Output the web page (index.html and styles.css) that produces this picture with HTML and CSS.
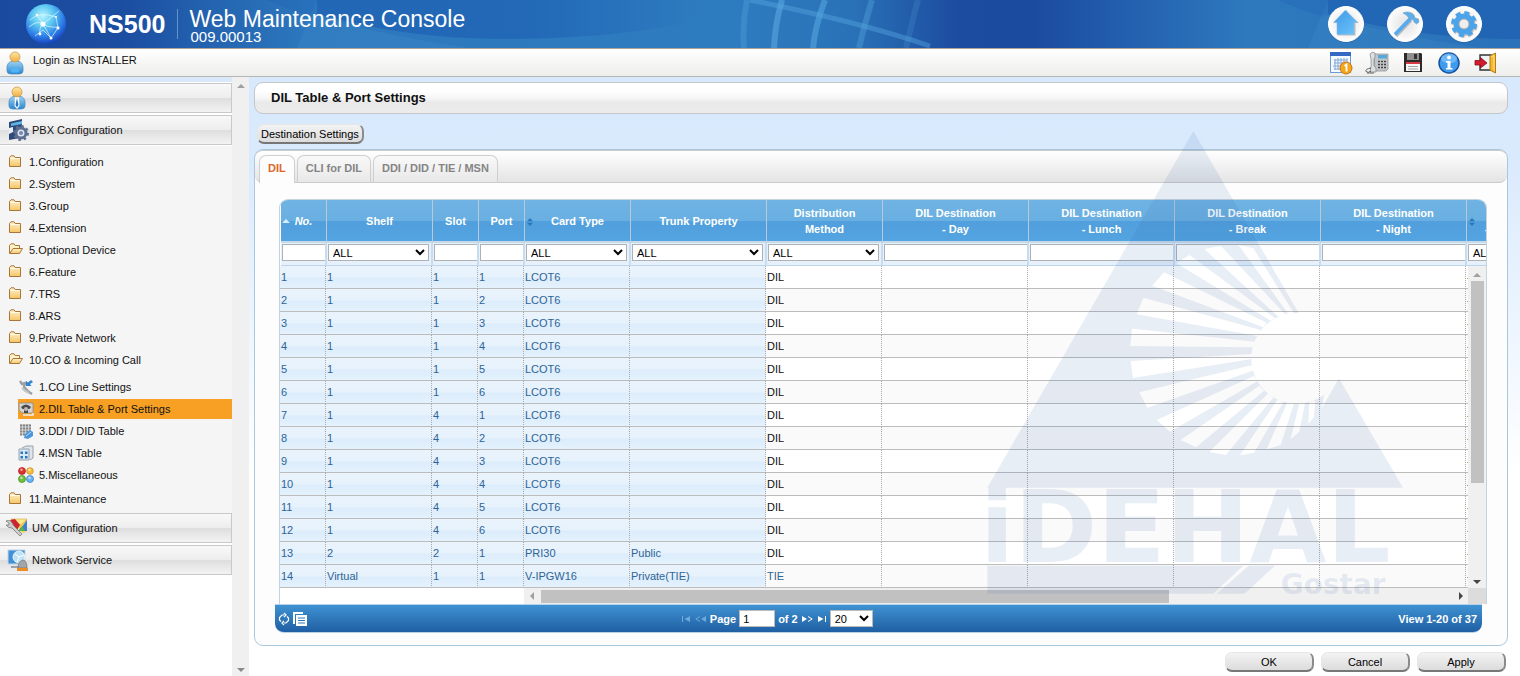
FILE: index.html
```html
<!DOCTYPE html>
<html lang="en">
<head>
<meta charset="utf-8">
<title>NS500 Web Maintenance Console</title>
<link rel="stylesheet" href="styles.css">
</head>
<body>
<svg width="0" height="0" class="defs" aria-hidden="true">
  <defs>
    <linearGradient id="gFolder" x1="0" y1="0" x2="0" y2="1"><stop offset="0" stop-color="#fff3cf"/><stop offset="1" stop-color="#f5c565"/></linearGradient>
    <linearGradient id="gSkin" x1="0" y1="0" x2="0" y2="1"><stop offset="0" stop-color="#ffe9a8"/><stop offset="1" stop-color="#f0ab3c"/></linearGradient>
    <linearGradient id="gBody" x1="0" y1="0" x2="0" y2="1"><stop offset="0" stop-color="#9fd4f5"/><stop offset="1" stop-color="#2a86d0"/></linearGradient>
    <linearGradient id="gAction" x1="0" y1="0" x2="1" y2="1"><stop offset="0" stop-color="#3f97e6"/><stop offset="1" stop-color="#6cc6fa"/></linearGradient>
    <radialGradient id="gDisc" cx=".5" cy=".5" r=".5"><stop offset="0" stop-color="#e2e2e2"/><stop offset=".75" stop-color="#f6f6f6"/><stop offset="1" stop-color="#fff"/></radialGradient>
    <symbol id="folder" viewBox="0 0 14 13"><path d="M.5 11.500V2.500L2 .8H5L6.200 2.500H11.500V11.500Z" fill="url(#gFolder)" stroke="#a9763a"/><path d="M1.500 3.500H10.500" stroke="#fffbe8"/></symbol>
    <symbol id="folder-open" viewBox="0 0 14 13"><path d="M.5 10.500V2.500L2 .8H5L6.200 2.500H10.500V5" fill="#fff1c6" stroke="#a9763a"/><path d="M.8 10.500 4 5.500H13.500L10.500 10.500Z" fill="url(#gFolder)" stroke="#a9763a"/></symbol>
  </defs>
</svg>

<header class="banner">
  <svg class="banner-art" viewBox="0 0 1520 48" preserveAspectRatio="none" aria-hidden="true">
    <defs>
      <linearGradient id="gWave" gradientUnits="userSpaceOnUse" x1="317" y1="0" x2="700" y2="0"><stop offset="0" stop-color="#1757ae"/><stop offset=".55" stop-color="#1757ae"/><stop offset="1" stop-color="#1757ae" stop-opacity="0"/></linearGradient>
      <g id="wave">
        <path d="M317 0V14C380 31 440 39 500 39C580 39 640 33 700 20V0Z" fill="url(#gWave)" opacity=".5"/>
        <path d="M267 0C290 10 304 14 313 17L317 0Z" fill="#1757ae" opacity=".2"/>
        <path d="M317 0 297 48H470C400 38 350 26 313 14Z" fill="#4a97d2" opacity=".2"/>
      </g>
    </defs>
    <use href="#wave"/>
    <use href="#wave" x="1011"/>
    <g fill="none" stroke="#55a5dd" stroke-width="6">
      <path d="M747 0Q742 24 744 48" opacity=".35"/>
      <path d="M782 0Q775 24 774 48" opacity=".65"/>
      <path d="M825 0Q815 26 813 48" opacity=".6"/>
      <path d="M872 0Q864 26 859 48" opacity=".4"/>
      <path d="M918 0Q911 26 906 48" opacity=".2"/>
      <path d="M750 0Q860 22 930 46" opacity=".45" stroke-width="5"/>
    </g>
  </svg>
  <svg class="globe" viewBox="0 0 42 42" role="img" aria-label="NS500">
    <defs><radialGradient id="gGlobe" cx=".42" cy=".3" r=".75"><stop offset="0" stop-color="#b9f4ff"/><stop offset=".35" stop-color="#5fc9f2"/><stop offset=".7" stop-color="#2b7be6"/><stop offset="1" stop-color="#1535b0"/></radialGradient></defs>
    <circle cx="21" cy="21" r="20" fill="url(#gGlobe)"/>
    <path d="M4 24Q12 17 18 21T34 24M12 12 18 21 26 35M18 21 34 8M10 33 18 27 26 35 33 25 31 14M5 17Q14 8 31 14M15 31Q14 24 18 21" fill="none" stroke="#e2faff" stroke-width=".8" opacity=".85"/>
    <g fill="#fff"><circle cx="18" cy="21" r="2.600"/><circle cx="12" cy="12" r="1.300"/><circle cx="33" cy="25" r="1.600"/><circle cx="26" cy="35" r="1.500"/><circle cx="15" cy="31" r="1.400"/><circle cx="31" cy="14" r="1"/></g>
  </svg>
  <strong class="product">NS500</strong>
  <div class="console"><h1>Web Maintenance Console</h1><span>009.00013</span></div>
  <nav class="actions" aria-label="Console">
    <button type="button" aria-label="Home"><svg viewBox="0 0 38 38"><circle cx="19" cy="19.500" r="18" fill="#173f80" opacity=".5"/><circle cx="19" cy="19" r="17.500" fill="url(#gDisc)" stroke="#fff"/><path d="M19 6 32 18H28.500V30.500H10.500V18H7Z" fill="#9b9b9b" opacity=".6"/><path d="M18.500 5 30.500 17.500H27V29.500H10V17.500H6.500Z" fill="url(#gAction)" stroke="#8dbce6" stroke-width=".6"/></svg></button>
    <button type="button" aria-label="Tools"><svg viewBox="0 0 38 38"><circle cx="19" cy="19.500" r="18" fill="#173f80" opacity=".5"/><circle cx="19" cy="19" r="17.500" fill="url(#gDisc)" stroke="#fff"/><path d="M10 31 25 15" stroke="#999" stroke-width="3.500" opacity=".6"/><path d="M9 29.500 24.500 13.500" stroke="#55aaf0" stroke-width="3.800"/><path d="M17 8C20 6.500 25 6.500 28 10L29 13 32.500 14 33 17 30.500 19 28 17 27.500 15 24 13.500 22 12C21 10 19 9.500 17 8Z" fill="#5eaee9" stroke="#7d9fbd" stroke-width=".6"/></svg></button>
    <button type="button" aria-label="Settings"><svg viewBox="0 0 38 38"><circle cx="19" cy="19.500" r="18" fill="#173f80" opacity=".5"/><circle cx="19" cy="19" r="17.500" fill="url(#gDisc)" stroke="#fff"/><g transform="translate(.6 1)" fill="none" stroke="#999" opacity=".6"><circle cx="19" cy="19" r="8" stroke-width="6"/><circle cx="19" cy="19" r="11.200" stroke-width="3.600" stroke-dasharray="4.900 3.900"/></g><g fill="none" stroke="#4ba3ea"><circle cx="19" cy="19" r="7.500" stroke-width="6"/><circle cx="19" cy="19" r="11.200" stroke-width="3.600" stroke-dasharray="4.900 3.900"/></g><circle cx="19" cy="19" r="5" fill="#eee" stroke="#aaa"/></svg></button>
  </nav>
</header>

<div class="login-bar">
  <svg class="login-icon" viewBox="0 0 18 24" aria-hidden="true"><path d="M1 17C1 11 5 10 9 10S17 11 17 17V20Q17 23 13 23H5Q1 23 1 20Z" fill="url(#gBody)" stroke="#4b8fc4" stroke-width=".8"/><circle cx="9" cy="6" r="5" fill="url(#gSkin)" stroke="#c99a4c" stroke-width=".8"/><path d="M4 19Q9 14 14 19L12 21.500H6Z" fill="#4fb4f3"/></svg>
  <span>Login as INSTALLER</span>
  <div class="tools">
    <button type="button" aria-label="Calendar"><svg viewBox="0 0 24 24"><rect x="1.500" y="1.500" width="20" height="20" fill="#f4f8ff" stroke="#6f9bd2"/><path d="M1 1H22V5H1Z" fill="#3567c4"/><path d="M5 9H18M5 12H18M4 15H14M5 18H12M6 8V19M9 7V19M12 7V19M15 7V14M18 7V12" stroke="#86a7d6"/><circle cx="17" cy="17" r="6" fill="#f4a61d" stroke="#c8750d"/><path d="M15.500 15 17.500 13.500V20.500" stroke="#fff" stroke-width="1.800" fill="none"/></svg></button>
    <button type="button" aria-label="Telephone"><svg viewBox="0 0 24 24"><path d="M9 3H23V18L21 20H10Z" fill="#c3c6c9" stroke="#85888b" stroke-width=".7"/><path d="M5 3Q7 0 10 2V6L9 8V15L11 17V21H5Q7 14 6 8Z" fill="#dddfe1" stroke="#8a8d90" stroke-width=".8"/><path d="M13 4H22V7.500H13Z" fill="#56a9dc"/><path d="M13 10.500H21M13 13.500H21M13 16.500H21" stroke="#454545" stroke-width="1.600" stroke-dasharray="2 1"/><path d="M6 17Q0 18 1 20.500Q3 22.500 6 20M2 22H9" fill="none" stroke="#555" stroke-width=".9"/></svg></button>
    <button type="button" aria-label="Save"><svg viewBox="0 0 24 24"><path d="M3 2H20L21 3V21H3Z" fill="#2c2a2b"/><path d="M6 2H18V9H6Z" fill="#8f8f8f"/><path d="M13 3H16V8H13Z" fill="#333"/><path d="M5 12H19V20H5Z" fill="#f7f7f7"/><path d="M5 11H19V13H5Z" fill="#d83a43"/><path d="M7 15.500H17M7 18H17" stroke="#a5a5a5"/></svg></button>
    <button type="button" aria-label="Information"><svg viewBox="0 0 24 24"><circle cx="12" cy="12" r="10" fill="#3f9bed" stroke="#174f9f" stroke-width="1.500"/><ellipse cx="12" cy="7.500" rx="8" ry="5" fill="#8cccfb" opacity=".6"/><circle cx="12" cy="6.500" r="1.900" fill="#fff"/><path d="M9 10H13.500V17H15.500V18.500H9V17H10.500V11.500H9Z" fill="#fff"/></svg></button>
    <button type="button" aria-label="Logout"><svg viewBox="0 0 24 24"><path d="M7 4H18V19H7Z" fill="#eef3f7" stroke="#333" stroke-width="1.400"/><path d="M17 5 22.500 2V22L17 19Z" fill="#f4b72f" stroke="#b57c12"/><path d="M18 6 21 4.500V19" stroke="#ffe28a" fill="none"/><path d="M2 9.500H7.500V6.500L14 12 7.500 17V14H2Z" fill="#d31c2b" stroke="#8a0c17" stroke-width=".8"/></svg></button>
  </div>
</div>

<div class="layout">
  <aside class="side">
    <nav class="menu" aria-label="Main menu">
      <a class="section" href="#users"><svg viewBox="0 0 24 24" aria-hidden="true"><path d="M4 17C4 11 8 10 12 10S20 11 20 17V20Q20 23 16 23H8Q4 23 4 20Z" fill="url(#gBody)" stroke="#4b8fc4" stroke-width=".8"/><path d="M10 11H14L14.500 20 12 23 9.500 20Z" fill="#fff"/><path d="M12 12 13.500 19 12 21.500 10.500 19Z" fill="#2a79c4"/><circle cx="12" cy="6" r="5" fill="url(#gSkin)" stroke="#c99a4c" stroke-width=".8"/></svg>Users</a>
      <a class="section" href="#pbx"><svg viewBox="0 0 24 24" aria-hidden="true"><path d="M4 4 17 1V17L15 20 4 22Z" fill="#2e4b78"/><path d="M6 5.500 17 3V6L6 8Z" fill="#5cb6e8"/><path d="M4 10 8 9V14L4 16Z" fill="#e6eef7"/><circle cx="16" cy="15" r="5" fill="#dfe5ef" stroke="#5f6f91" stroke-width="3"/><circle cx="16" cy="15" r="7" fill="none" stroke="#5f6f91" stroke-width="2" stroke-dasharray="2.600 2.900"/><circle cx="16" cy="15" r="2" fill="#6e87b0"/></svg>PBX Configuration</a>
      <ul class="tree">
        <li><a href="#c1"><svg><use href="#folder"/></svg>1.Configuration</a></li>
        <li><a href="#c2"><svg><use href="#folder"/></svg>2.System</a></li>
        <li><a href="#c3"><svg><use href="#folder"/></svg>3.Group</a></li>
        <li><a href="#c4"><svg><use href="#folder"/></svg>4.Extension</a></li>
        <li><a href="#c5"><svg><use href="#folder-open"/></svg>5.Optional Device</a></li>
        <li><a href="#c6"><svg><use href="#folder"/></svg>6.Feature</a></li>
        <li><a href="#c7"><svg><use href="#folder"/></svg>7.TRS</a></li>
        <li><a href="#c8"><svg><use href="#folder"/></svg>8.ARS</a></li>
        <li><a href="#c9"><svg><use href="#folder"/></svg>9.Private Network</a></li>
        <li><a href="#c10"><svg><use href="#folder-open"/></svg>10.CO &amp; Incoming Call</a>
          <ul class="branch">
            <li><a href="#s1"><svg viewBox="0 0 16 16"><path d="M2 2 4 5 7 4 6 8 11 13 14 15" fill="none" stroke="#9a9fa5" stroke-width="2.400"/><path d="M4 9 7 12 11 14" fill="none" stroke="#c4c7ca" stroke-width="2"/><path d="M8 7V2L10 3.500 13 1 15 3 12 5 13.500 7Z" fill="#2f83cf"/></svg>1.CO Line Settings</a></li>
            <li><a class="current" href="#s2" aria-current="page"><svg viewBox="0 0 16 16"><path d="M1 2H15V12H4L1 9Z" fill="#d3d3d3" stroke="#8c8c8c" stroke-width=".8"/><path d="M3 6Q8 1 13 6L11.500 8H10V12H6V8H4.500Z" fill="#4a4a4a"/><circle cx="8" cy="8" r="2" fill="#bbb"/><path d="M5 14H15V12" fill="none" stroke="#eee" stroke-width="1.500"/></svg>2.DIL Table &amp; Port Settings</a></li>
            <li><a href="#s3"><svg viewBox="0 0 16 16"><path d="M2 1H13V12H2Z" fill="#d9d9d9"/><path d="M2 2.500H13M2 5.500H13M2 8.500H13M2 11.500H13" stroke="#838383" stroke-width="2" stroke-dasharray="2.200 .8"/><path d="M6 15 7 11 12 7 15 9V13L10 16Z" fill="#4c97dc"/><path d="M8 13 13 9" stroke="#b3daf8"/></svg>3.DDI / DID Table</a></li>
            <li><a href="#s4"><svg viewBox="0 0 16 16"><path d="M4 3 8 1H15V13L12 15" fill="#dfe5ea" stroke="#8f9aa5" stroke-width=".9"/><path d="M1 4H11V15H1Z" fill="#d8eaf8" stroke="#8f9aa5" stroke-width=".9"/><path d="M2.500 6.500H5V9H2.500ZM7 6.500H9.500V9H7ZM2.500 11H5V13.500H2.500ZM7 11H9.500V13.500H7Z" fill="#2f74be"/></svg>4.MSN Table</a></li>
            <li><a href="#s5"><svg viewBox="0 0 16 16"><circle cx="4" cy="4" r="3.500" fill="#e0302f" stroke="#a31d1d" stroke-width=".7"/><circle cx="12" cy="4" r="3.300" fill="#f6bd36" stroke="#c4861a" stroke-width=".7"/><circle cx="4" cy="12" r="3.500" fill="#6fc23c" stroke="#3d8a1d" stroke-width=".7"/><circle cx="12" cy="12" r="3.500" fill="#6bb4f2" stroke="#2f77bf" stroke-width=".7"/><g fill="#fff" opacity=".6"><circle cx="3.500" cy="2.700" r="1.200"/><circle cx="11.500" cy="2.700" r="1.200"/><circle cx="3.500" cy="10.700" r="1.200"/><circle cx="11.500" cy="10.700" r="1.200"/></g></svg>5.Miscellaneous</a></li>
          </ul>
        </li>
        <li><a href="#c11"><svg><use href="#folder"/></svg>11.Maintenance</a></li>
      </ul>
      <a class="section" href="#um"><svg viewBox="0 0 24 24" aria-hidden="true"><path d="M6 3H22V15L18 17Z" fill="#f3cf4a"/><path d="M6 3H22L16 9Z" fill="#fbe88b" stroke="#c9a13a" stroke-width=".5"/><path d="M22 4V15H14Z" fill="#3d7fd0"/><path d="M13 15 17 10 20 15Z" fill="#58b04a"/><path d="M5 4 10 3 15 9 12 14Z" fill="#cf2430"/><path d="M1 5Q6 3 8 9L17 18 15 20 7 12Q3 12 1 9H4V7Z" fill="#cfcfcf" stroke="#777" stroke-width=".8"/></svg>UM Configuration</a>
      <a class="section" href="#net"><svg viewBox="0 0 24 24" aria-hidden="true"><path d="M3 2H20V16H3Z" fill="#3f91d8" stroke="#c5d3df"/><circle cx="14" cy="9" r="6" fill="#bfe2f7" stroke="#fff" stroke-width=".8"/><path d="M10 6 14 9 12 14M14 9 19 7" stroke="#fff" fill="none"/><path d="M6 18H14V20H6Z" fill="#9aa3ab"/><path d="M13 20Q13 13 18 12Q22 13 22 20Z" fill="#a3a6a8" stroke="#6b6e70" stroke-width=".7"/><path d="M12 20H23V23H12Z" fill="#ea8f25"/></svg>Network Service</a>
    </nav>
    <div class="vbar" aria-hidden="true"><i class="arrow up"></i><i class="arrow down"></i></div>
  </aside>

  <main class="main">
    <h2 class="title">DIL Table &amp; Port Settings</h2>
    <button type="button" class="btn dest">Destination Settings</button>

    <section class="panel">
      <div class="tabs" role="tablist">
        <button type="button" role="tab" aria-selected="true">DIL</button>
        <button type="button" role="tab" aria-selected="false">CLI for DIL</button>
        <button type="button" role="tab" aria-selected="false">DDI / DID / TIE / MSN</button>
      </div>

      <div class="grid">
        <div class="clip head">
          <table class="cols">
            <colgroup><col class="w46"><col class="w106"><col class="w46"><col class="w46"><col class="w106"><col class="w136"><col class="w116"><col class="w146"><col class="w146"><col class="w146"><col class="w146"><col class="w40"></colgroup>
            <thead>
              <tr class="names">
                <th class="sorted"><i class="arrow up"></i>No.</th><th>Shelf</th><th>Slot</th><th>Port</th>
                <th class="sortable"><i class="updown"></i>Card Type</th><th>Trunk Property</th><th>Distribution<br>Method</th>
                <th>DIL Destination<br>- Day</th><th>DIL Destination<br>- Lunch</th><th>DIL Destination<br>- Break</th><th>DIL Destination<br>- Night</th>
                <th class="sortable"><i class="updown"></i>&nbsp;<br>-</th>
              </tr>
              <tr class="filters">
                <th><input type="text" aria-label="Filter No."></th>
                <th><select aria-label="Filter Shelf"><option>ALL</option></select></th>
                <th><input type="text" aria-label="Filter Slot"></th>
                <th><input type="text" aria-label="Filter Port"></th>
                <th><select aria-label="Filter Card Type"><option>ALL</option></select></th>
                <th><select aria-label="Filter Trunk Property"><option>ALL</option></select></th>
                <th><select aria-label="Filter Distribution Method"><option>ALL</option></select></th>
                <th><input type="text" aria-label="Filter Day"></th>
                <th><input type="text" aria-label="Filter Lunch"></th>
                <th><input type="text" aria-label="Filter Break"></th>
                <th><input type="text" aria-label="Filter Night"></th>
                <th><select class="wide" aria-label="Filter last column"><option>ALL</option></select></th>
              </tr>
            </thead>
          </table>
        </div>
        <div class="scroller">
          <div class="clip">
            <table class="rows">
              <colgroup><col class="w46"><col class="w106"><col class="w46"><col class="w46"><col class="w106"><col class="w136"><col class="w116"><col class="w146"><col class="w146"><col class="w146"><col class="w146"><col class="w40"></colgroup>
              <tbody>
                <tr><td>1</td><td>1</td><td>1</td><td>1</td><td>LCOT6</td><td></td><td>DIL</td><td></td><td></td><td></td><td></td><td>-</td></tr>
                <tr><td>2</td><td>1</td><td>1</td><td>2</td><td>LCOT6</td><td></td><td>DIL</td><td></td><td></td><td></td><td></td><td>-</td></tr>
                <tr><td>3</td><td>1</td><td>1</td><td>3</td><td>LCOT6</td><td></td><td>DIL</td><td></td><td></td><td></td><td></td><td>-</td></tr>
                <tr><td>4</td><td>1</td><td>1</td><td>4</td><td>LCOT6</td><td></td><td>DIL</td><td></td><td></td><td></td><td></td><td>-</td></tr>
                <tr><td>5</td><td>1</td><td>1</td><td>5</td><td>LCOT6</td><td></td><td>DIL</td><td></td><td></td><td></td><td></td><td>-</td></tr>
                <tr><td>6</td><td>1</td><td>1</td><td>6</td><td>LCOT6</td><td></td><td>DIL</td><td></td><td></td><td></td><td></td><td>-</td></tr>
                <tr><td>7</td><td>1</td><td>4</td><td>1</td><td>LCOT6</td><td></td><td>DIL</td><td></td><td></td><td></td><td></td><td>-</td></tr>
                <tr><td>8</td><td>1</td><td>4</td><td>2</td><td>LCOT6</td><td></td><td>DIL</td><td></td><td></td><td></td><td></td><td>-</td></tr>
                <tr><td>9</td><td>1</td><td>4</td><td>3</td><td>LCOT6</td><td></td><td>DIL</td><td></td><td></td><td></td><td></td><td>-</td></tr>
                <tr><td>10</td><td>1</td><td>4</td><td>4</td><td>LCOT6</td><td></td><td>DIL</td><td></td><td></td><td></td><td></td><td>-</td></tr>
                <tr><td>11</td><td>1</td><td>4</td><td>5</td><td>LCOT6</td><td></td><td>DIL</td><td></td><td></td><td></td><td></td><td>-</td></tr>
                <tr><td>12</td><td>1</td><td>4</td><td>6</td><td>LCOT6</td><td></td><td>DIL</td><td></td><td></td><td></td><td></td><td>-</td></tr>
                <tr><td>13</td><td>2</td><td>2</td><td>1</td><td>PRI30</td><td>Public</td><td>DIL</td><td></td><td></td><td></td><td></td><td>-</td></tr>
                <tr><td>14</td><td>Virtual</td><td>1</td><td>1</td><td>V-IPGW16</td><td>Private(TIE)</td><td class="locked">TIE</td><td></td><td></td><td></td><td></td><td>-</td></tr>
              </tbody>
            </table>
          </div>
          <div class="vbar" aria-hidden="true"><i class="arrow up"></i><div class="vthumb"></div><i class="arrow down dark"></i></div>
        </div>
        <div class="hrow" aria-hidden="true">
          <div class="hbar"><i class="arrow left"></i><div class="hthumb"></div><i class="arrow right dark"></i></div>
          <div class="corner"></div>
        </div>
      </div>

      <div class="pager">
        <div class="pager-tools">
          <button type="button" aria-label="Reload"><svg width="12" height="14" viewBox="0 0 12 14" fill="none" stroke="#fff" stroke-width="1.200"><path d="M6 3H4L1.500 5.500V8L3 9.500M6 1 8 3 6 5M6 11H8L10.500 8.500V6L9 4.500M6 9 4 11 6 13"/></svg></button>
          <button type="button" aria-label="Columns"><svg width="14" height="14" viewBox="0 0 14 14"><path d="M0 0H10V2H2V12H0Z" fill="#fff"/><path d="M3 3H14V14H3Z" fill="#fff"/><path d="M5 6H12M5 8.500H12M5 11H12" stroke="#2d76b8"/></svg></button>
        </div>
        <div class="pages">
          <button type="button" class="dim" aria-label="First page"><svg width="10" height="8" viewBox="0 0 10 8"><path d="M1 1H2V7H1ZM9 1V7L3.500 4Z"/></svg></button>
          <button type="button" class="dim" aria-label="Previous page"><svg width="12" height="8" viewBox="0 0 12 8"><path d="M11 1V7L6 4Z"/><path d="M5 1.500.8 4 5 6.500" fill="none" stroke="currentColor"/></svg></button>
          <label for="page">Page</label><input id="page" type="text" value="1"><span>of 2</span>
          <button type="button" aria-label="Next page"><svg width="12" height="8" viewBox="0 0 12 8"><path d="M1 1V7L6 4Z"/><path d="M7 1.500 11.200 4 7 6.500" fill="none" stroke="currentColor"/></svg></button>
          <button type="button" aria-label="Last page"><svg width="10" height="8" viewBox="0 0 10 8"><path d="M1 1V7L6.500 4ZM8 1H9V7H8Z"/></svg></button>
          <select aria-label="Rows per page"><option>20</option></select>
        </div>
        <div class="view">View 1-20 of 37</div>
      </div>
    </section>

    <div class="foot">
      <button type="button" class="btn">OK</button>
      <button type="button" class="btn">Cancel</button>
      <button type="button" class="btn">Apply</button>
    </div>

    <svg class="watermark" viewBox="0 0 1440 1470" role="img" aria-label="iDEHAL Gostar">
      <defs>
        <mask id="fan" maskUnits="userSpaceOnUse" x="0" y="0" width="1440" height="1470">
          <rect width="1440" height="1470" fill="#fff"/>
          <circle cx="1010" cy="715" r="136"/>
          <path d="M835 374 880 385 1002 580 985 582ZM733 387 783 378 977 585 957 592ZM650 430 688 405 945 595 932 602ZM577 497 612 457 920 608 910 622ZM530 583 550 533 902 630 892 648ZM511 678 516 626 892 666 882 682ZM519 774 512 723 880 702 880 716ZM562 863 538 817 878 735 884 750ZM630 935 590 900 882 768 892 784ZM708 982 662 960 898 797 912 812ZM797 1005 748 996 925 820 940 833ZM882 998 840 1006 953 838 970 846ZM962 975 920 988 982 848 1002 850ZM1018 935 992 957 1018 850 1035 850ZM1062 890 1045 912 1048 845 1066 842ZM1110 822 1085 865 1092 825 1100 815Z"/>
        </mask>
      </defs>
      <g fill="#2c5fa6" opacity=".1">
        <path mask="url(#fan)" d="M700 33 1015 577 1010 715 1108 825 1137 775 1329 1103H82Z"/>
        <text class="mark" x="60" y="1326">iDEHAL</text>
        <path d="M82 1337H850L760 1421H82ZM866 1337H945L854 1421H770Z"/>
        <text class="submark" x="962" y="1421">Gostar</text>
      </g>
    </svg>
  </main>
</div>
</body>
</html>
```
FILE: styles.css
```css
* { box-sizing: border-box; }
body {
  margin: 0;
  min-height: 100vh;
  display: flex;
  flex-direction: column;
  background: #fff;
  color: #111;
  font: 11px/16px "Liberation Sans", Arial, sans-serif;
}
button, input, select { font: inherit; color: inherit; margin: 0; border-radius: 0; }
button { border: 0; padding: 0; background: none; }
a { color: inherit; text-decoration: none; }
ul { list-style: none; margin: 0; padding: 0; }
svg { display: block; }
.defs { position: absolute; }

.banner {
  position: relative;
  flex: none;
  display: flex;
  align-items: center;
  height: 49px;
  padding: 0 37px 0 25px;
  border-bottom: 1px solid #b3a595;
  background: linear-gradient(90deg, #1a4a9f 0, #1b4da1 8%, #2464b0 14%, #2c77bd 20%, #2e7cc0 48%, #2a72b8 56%, #1c4c9f 63%, #1b4b9f 68%, #235fae 74%, #2d79be 82%, #2a72b9 100%);
  color: #fff;
}
.banner-art { position: absolute; inset: 0; width: 100%; height: 100%; }
.banner > :not(.banner-art) { position: relative; }
.globe { width: 42px; height: 42px; }
.product { margin-left: 22px; font-size: 25px; line-height: 48px; }
.console {
  margin-left: 12px;
  padding-left: 11px;
  height: 30px;
  border-left: 1px solid #5f95cf;
  display: flex;
  flex-direction: column;
}
.console h1 { margin: 0; font-size: 23px; line-height: 20px; font-weight: 400; white-space: nowrap; }
.console span { font-size: 15px; line-height: 16px; padding-left: 1px; }
.actions { margin-left: auto; display: flex; gap: 21px; }
.actions svg { width: 38px; height: 38px; }

.login-bar {
  flex: none;
  display: flex;
  align-items: center;
  height: 28px;
  padding: 0 23px 0 6px;
  border-bottom: 1px solid #b5b8b0;
  background: linear-gradient(#fff, #eeeeec);
}
.login-icon { width: 18px; height: 24px; margin-right: 9px; }
.login-bar > span { padding-bottom: 6px; }
.tools { margin-left: auto; display: flex; gap: 12px; }
.tools svg { width: 24px; height: 24px; }

.layout { flex: 1; display: flex; }
.side { flex: none; width: 249px; display: flex; }
.menu { flex: 1; padding-top: 6px; background: linear-gradient(#d9e9fb 0, #d9e9fb 5px, #fff 5px); }
.section {
  display: flex;
  align-items: center;
  height: 30px;
  margin-bottom: 2px;
  padding-left: 5px;
  gap: 3px;
  border: 1px solid #c9c9cb;
  border-left: 0;
  background: linear-gradient(#f8f8f8, #eee 48%, #dedede 52%, #f3f3f3);
}
.section svg { width: 24px; height: 24px; }
.tree { margin-top: -1px; padding: 5px 0 3px; background: #f5f5f5; }
.tree a { display: flex; align-items: center; height: 20px; padding-left: 9px; }
.tree li { padding: 1px 0; }
.tree svg { width: 14px; height: 13px; margin: 0 6px 2px 0; }
.branch { padding: 6px 0 1px 18px; }
.tree .branch a { padding-left: 0; }
.tree .branch svg { width: 16px; height: 16px; margin: 0 5px 0 0; }
.branch .current { background: #f7a023; }

.vbar {
  flex: none;
  width: 17px;
  display: flex;
  flex-direction: column;
  align-items: center;
  justify-content: space-between;
  padding: 7px 0 4px;
  background: #f0f0f0;
}
.arrow { width: 0; height: 0; border: 4px solid transparent; }
.up { border-bottom-color: #a0a0a0; border-top-width: 0; }
.down { border-top-color: #8a8a8a; border-bottom-width: 0; }
.left { border-right-color: #a0a0a0; border-left-width: 0; }
.right { border-left-color: #a0a0a0; border-right-width: 0; }
.down.dark { border-top-color: #444; }
.right.dark { border-left-color: #444; }

.main {
  position: relative;
  flex: 1;
  min-width: 0;
  padding: 5px 12px 4px 5px;
  background: linear-gradient(#d8e9fd 0, #d9eafd 80px, #fff 400px);
}
.title {
  margin: 0 0 10px;
  padding: 0 16px;
  border: 1px solid #c4c6c8;
  border-radius: 9px;
  background: linear-gradient(#fff 25%, #f6f6f6 50%, #e9e9e9 65%, #ececec);
  font-size: 13px;
  line-height: 30px;
}
.btn {
  height: 20px;
  border: 1px solid #e6e6e6;
  border-right: 2px solid #8b8b8b;
  border-bottom: 2px solid #777;
  border-radius: 7px;
  background: linear-gradient(#f3f3f3, #dcdcdc);
  color: #000;
}
.dest { display: block; margin: 0 0 5px 3px; padding: 0 3px; }

.panel { border: 1px solid #a9c8de; border-radius: 9px; background: #fdfdfd; padding-bottom: 12px; }
.tabs {
  display: flex;
  align-items: flex-end;
  gap: 2px;
  height: 33px;
  padding-left: 4px;
  border: 1px solid #c8cacc;
  border-width: 1px 0;
  border-radius: 8px;
  background: linear-gradient(#fff, #e4e4e4);
}
.tabs button {
  height: 27px;
  padding: 0 8px 2px;
  border: 1px solid #cfcfcf;
  border-bottom: 0;
  border-radius: 7px 7px 0 0;
  background: linear-gradient(#f9f9f9, #e8e8e8);
  color: #858585;
  font-weight: 700;
}
.tabs button[aria-selected="true"] { height: 28px; margin-bottom: -1px; padding-bottom: 3px; background: #fdfdfd; color: #e0652a; }

.grid {
  margin: 16px 20px 0 24px;
  border: 1px solid #c5d3dd;
  border-bottom: 0;
  border-radius: 9px 9px 0 0;
  overflow: hidden;
  background: #fff;
}
.clip { overflow: hidden; flex: 1; min-width: 0; }
table { table-layout: fixed; width: 1182px; border-collapse: separate; border-spacing: 0; }
th, td { padding: 0; }
.w40 { width: 40px; }
.w46 { width: 46px; }
.w106 { width: 106px; }
.w116 { width: 116px; }
.w136 { width: 136px; }
.w146 { width: 146px; }
.head { padding-left: 1px; }
.names th {
  position: relative;
  height: 43px;
  border-right: 1px solid #b9c9d6;
  border-bottom: 2px solid #c5dbec;
  background: linear-gradient(#6fb3e4, #69afe1 50%, #519fdc 50%, #53a4e1);
  color: #fff;
}
.names .sorted { font-style: italic; }
.names .arrow, .updown { position: absolute; left: 1px; top: 19px; }
.names .arrow { border-bottom-color: #d5ecfb; }
.updown { left: 2px; top: 18px; width: 6px; height: 8px; background: #2977bd; clip-path: polygon(50% 0, 100% 40%, 0 40%, 0 60%, 100% 60%, 50% 100%, 0 60%, 0 40%); }
.filters th {
  height: 23px;
  padding: 1px 0 4px 1px;
  border-right: 2px solid #c8dcef;
  border-bottom: 1px solid #bdd6ee;
  background: #e6f1fc;
  text-align: left;
  font-weight: 400;
  color: #000;
}
.filters input, .filters select { display: block; width: 100%; height: 17px; padding: 0; border: 1px solid #aeb2b6; background: #fff; }
.filters input { border-right: 0; }
.filters select { width: calc(100% - 2px); }
.filters .wide { width: 60px; }

.scroller { display: flex; }
.scroller .vbar, .corner { width: 18px; }
.rows td {
  height: 23px;
  padding: 0 0 1px 1px;
  border-right: 1px dotted #aaa;
  border-bottom: 1px solid #bcbcbc;
  background: #fff;
  color: #111;
}
.rows tr:nth-child(even) td { background: #fafafa; }
.rows tr td:nth-child(-n+6), .rows tr .locked {
  background: linear-gradient(#eaf3fc, #e6f2fc 50%, #dcecfb 55%, #e4f2fd);
  color: #2e6496;
}
.vthumb { width: 13px; height: 202px; margin: 4px 0 auto; background: #c1c1c1; }
.hrow { display: flex; height: 16px; }
.hbar { flex: 1; margin-left: 244px; display: flex; align-items: center; padding: 0 5px 0 6px; background: #f0f0f0; }
.hthumb { width: 628px; height: 13px; margin: 0 auto 0 7px; background: #c1c1c1; }
.corner { background: #dcdcdc; }

.pager {
  display: grid;
  grid-template-columns: 2fr auto 3fr;
  align-items: center;
  height: 29px;
  margin: 0 25px 0 20px;
  padding: 0 5px 0 3px;
  border: 1px solid #b5d2ea;
  border-width: 1px 0;
  border-radius: 0 0 9px 9px;
  background: linear-gradient(#3f92d2, #1f5fa3);
  color: #fff;
  font-weight: 700;
}
.pager-tools, .pages { display: flex; align-items: center; }
.pager-tools { gap: 3px; }
.pages button { color: #fff; }
.pages button + button { margin-left: 4px; }
.pages .dim { color: #6ea9da; }
.pages path { fill: currentColor; }
.pages path[fill] { fill: none; }
.pages label { margin: 0 3px; }
.pages input { width: 36px; height: 17px; padding: 0 3px; border: 1px solid #bbb; background: #fff; color: #000; font-weight: 400; }
.pages span { margin: 0 3px; }
.pages select { width: 43px; height: 17px; margin-left: 3px; padding: 0; border: 1px solid #bbb; background: #fff; color: #000; font-weight: 400; }
.view { text-align: right; }

.foot { display: flex; justify-content: flex-end; gap: 7px; padding: 6px 2px 0 0; }
.foot .btn { width: 89px; }

.watermark { position: absolute; top: 43px; right: 80px; width: 480px; height: 490px; pointer-events: none; }
.mark { font: 700 300px "DejaVu Sans", sans-serif; }
.submark { font: 700 84px "DejaVu Sans", sans-serif; }
```
